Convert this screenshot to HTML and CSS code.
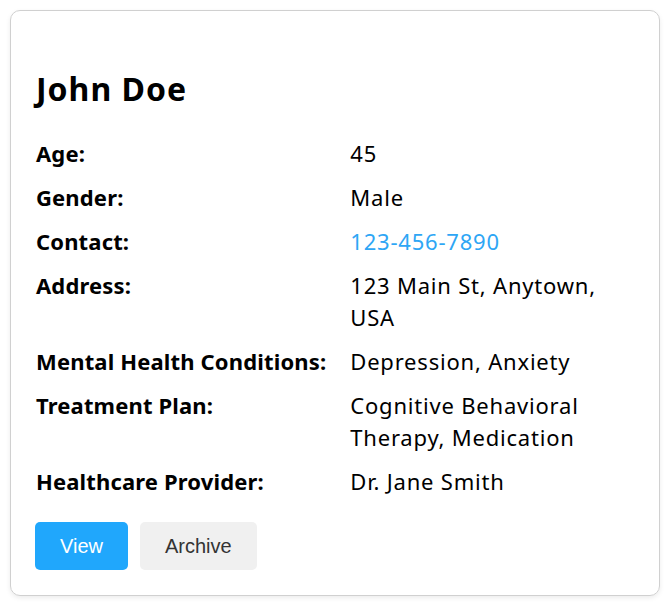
FILE: index.html
```html
<!DOCTYPE html>
<html lang="en">
<head>
<meta charset="utf-8">
<title>Patient</title>
<link rel="stylesheet" href="styles.css">
</head>
<body>
<div class="card">
  <h2 class="name">John Doe</h2>
  <dl class="info">
    <dt>Age:</dt><dd>45</dd>
    <dt>Gender:</dt><dd>Male</dd>
    <dt>Contact:</dt><dd><a class="phone" href="#">123-456-7890</a></dd>
    <dt>Address:</dt><dd>123 Main St, Anytown, USA</dd>
    <dt>Mental Health Conditions:</dt><dd>Depression, Anxiety</dd>
    <dt>Treatment Plan:</dt><dd>Cognitive Behavioral Therapy, Medication</dd>
    <dt>Healthcare Provider:</dt><dd>Dr. Jane Smith</dd>
  </dl>
  <div class="actions">
    <button class="btn btn-primary">View</button>
    <button class="btn btn-secondary">Archive</button>
  </div>
</div>
</body>
</html>
```
FILE: styles.css
```css
body {
  margin: 0;
  font-family: "Noto Sans", "DejaVu Sans", sans-serif;
  color: #000;
  background: #fff;
}
.card {
  margin: 10px;
  width: 650px;
  box-sizing: border-box;
  border: 1px solid #d0d0d0;
  border-radius: 10px;
  box-shadow: 0 2px 5px rgba(0, 0, 0, 0.08);
  padding: 25px 24px 25px 25px;
}
.name {
  margin: 35px 0 30px;
  font-size: 32px;
  line-height: 36px;
  letter-spacing: 1px;
  font-weight: 700;
}
.info {
  margin: 0;
  display: grid;
  grid-template-columns: auto 1fr;
  column-gap: 24px;
  row-gap: 12px;
  font-size: 22px;
  line-height: 32px;
}
.info dt {
  font-weight: 700;
  letter-spacing: 0.15px;
}
.info dd {
  margin: 0;
  letter-spacing: 0.8px;
}
.phone {
  color: #2ea6f5;
  text-decoration: none;
}
.actions {
  display: flex;
  gap: 12px;
  margin: 25px 0 0 -1px;
}
.btn {
  font-family: "Liberation Sans", Arial, sans-serif;
  font-size: 20px;
  line-height: 24px;
  padding: 12px 25px;
  border: none;
  border-radius: 5px;
}
.btn-primary {
  background: #20a7fc;
  color: #fff;
}
.btn-secondary {
  background: #f0f0f0;
  color: #333;
}
```
